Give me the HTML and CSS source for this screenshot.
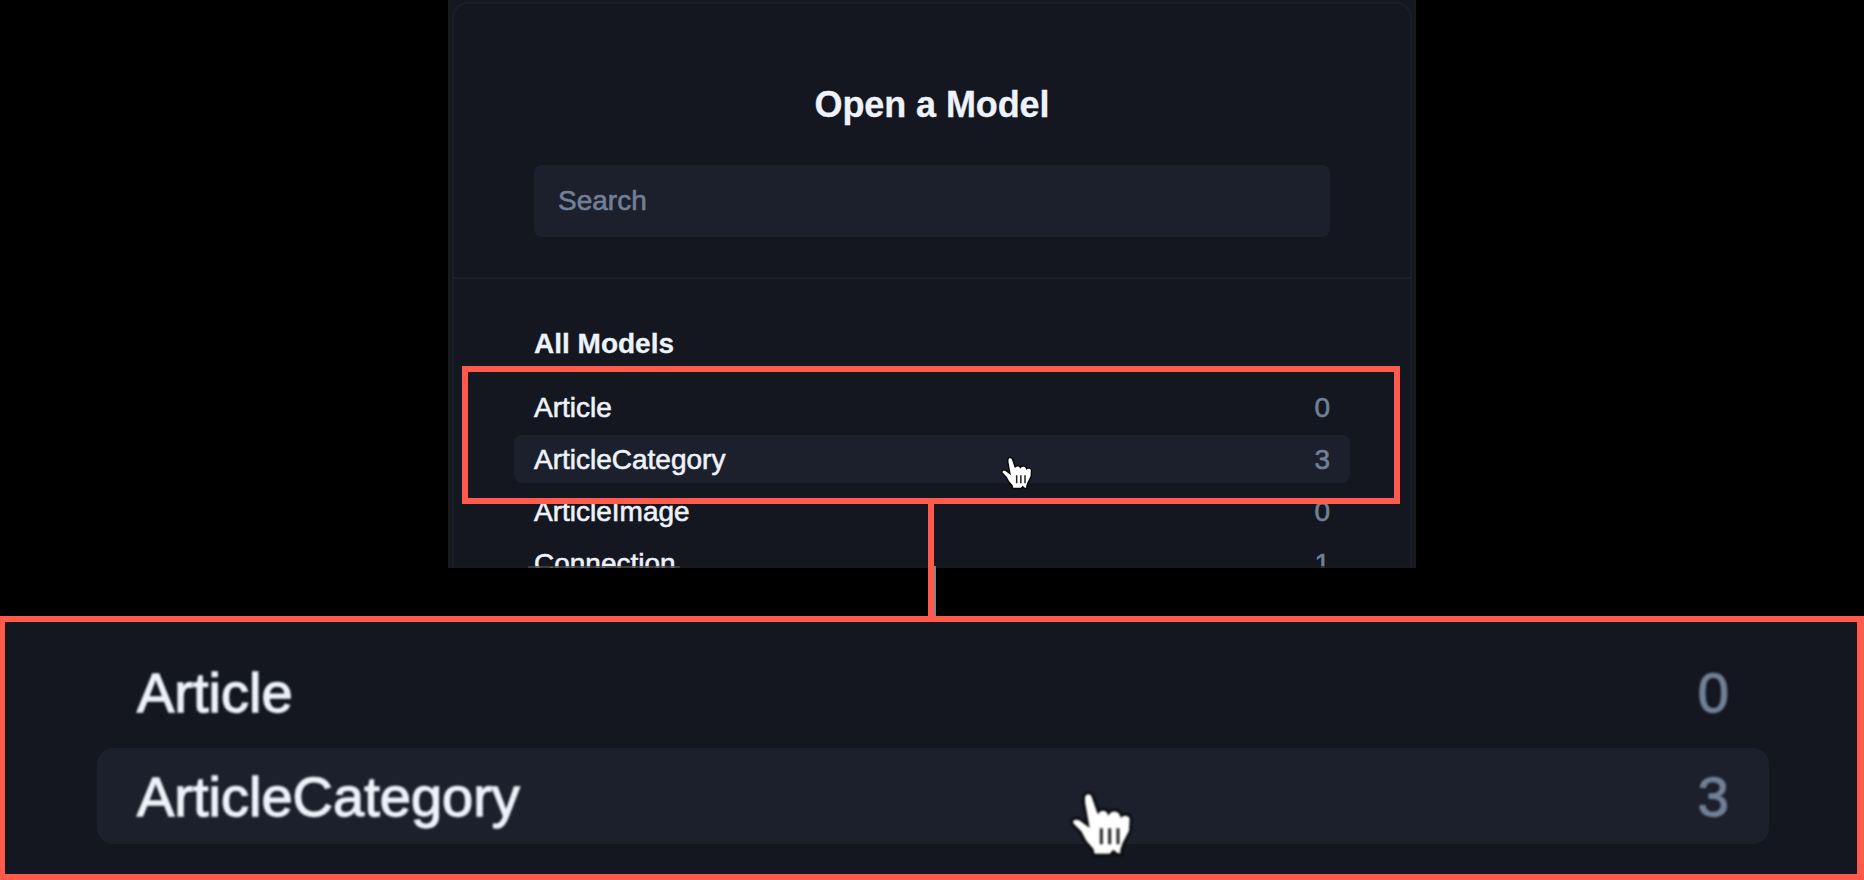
FILE: index.html
```html
<!DOCTYPE html>
<html lang="en">
<head>
<meta charset="utf-8">
<title>Open a Model</title>
<link rel="stylesheet" href="styles.css">
</head>
<body>
<svg class="defs" width="0" height="0" aria-hidden="true">
  <symbol id="hand" viewBox="0 0 330 330">
    <path class="hand-edge" d="M105 82C107 71 121 70 125 80L140 124L145 134C146 121 166 118 171 129L176 137C179 122 202 120 208 133L213 144C220 133 237 136 239 146L237 182L218 219L211 239V250H203L190 239L179 251H134L130 236L109 212L94 184L71 161C65 151 76 146 88 151L119 174L105 96Z"/>
    <path class="hand-fill" d="M105 82C107 71 121 70 125 80L140 124L145 134C146 121 166 118 171 129L176 137C179 122 202 120 208 133L213 144C220 133 237 136 239 146L237 182L218 219L211 239V250H203L190 239L179 251H134L130 236L109 212L94 184L71 161C65 151 76 146 88 151L119 174L105 96Z"/>
    <path class="hand-lines" d="M154 175V223M179 175V223M204 175V223"/>
  </symbol>
</svg>
<main class="stage">
  <section class="panel">
    <div class="dialog">
      <header class="head">
        <h1 class="title">Open a Model</h1>
        <div class="search">Search</div>
      </header>
      <div class="body">
        <h2 class="subtitle">All Models</h2>
        <ul class="list">
          <li class="row"><span>Article</span><span class="count">0</span></li>
          <li class="row active"><span>ArticleCategory</span><span class="count">3</span></li>
          <li class="row"><span>ArticleImage</span><span class="count">0</span></li>
          <li class="row"><span>Connection</span><span class="count">1</span></li>
        </ul>
      </div>
    </div>
    <div class="edge"></div>
    <div class="edge-label"></div>
  </section>
  <section class="closeup">
    <ul class="list large">
      <li class="row"><span>Article</span><span class="count">0</span></li>
      <li class="row active"><span>ArticleCategory</span><span class="count">3</span></li>
    </ul>
  </section>
  <div class="callout"></div>
  <div class="connector"></div>
  <div class="connector-shade"></div>
  <svg class="cursor small"><use href="#hand"/></svg>
  <svg class="cursor big"><use href="#hand"/></svg>
</main>
</body>
</html>
```
FILE: styles.css
```css
* { box-sizing: border-box; }
body {
  margin: 0;
  background: #000;
  color: #edf2fb;
  font-family: "Liberation Sans", Arial, sans-serif;
  font-size: 28px;
  overflow: hidden;
}
.defs { position: absolute; }
.stage {
  position: relative;
  width: 1864px;
  height: 880px;
  display: flex;
  flex-direction: column;
  justify-content: space-between;
}
.panel {
  position: relative;
  width: 968px;
  height: 568px;
  margin: 0 auto;
  padding: 2px 2px 0;
  overflow: hidden;
  background: #14171f;
  border: solid #1a1a1a;
  border-width: 0 2px;
}
.dialog {
  height: 700px;
  border: 2px solid #1b1f2b;
  border-radius: 16px;
}
.head {
  padding: 79px 80px 40px;
  border-bottom: 2px solid #1b1f2b;
}
.title {
  margin: 0 0 38px;
  font-size: 36px;
  line-height: 44px;
  text-align: center;
  letter-spacing: -0.1px;
  -webkit-text-stroke: 0.3px currentColor;
}
.search {
  height: 72px;
  padding: 0 24px;
  line-height: 72px;
  border-radius: 8px;
  background: #1c202c;
  color: #718096;
  -webkit-text-stroke: 0.6px currentColor;
}
.body { padding: 48px 80px 0; }
.subtitle {
  margin: 0 0 22px;
  font-size: 28px;
  line-height: 34px;
  -webkit-text-stroke: 0.3px currentColor;
}
.list {
  margin: 0 -20px;
  padding: 0;
  list-style: none;
  display: flex;
  flex-direction: column;
  gap: 4px;
}
.row {
  display: flex;
  justify-content: space-between;
  height: 48px;
  padding: 0 20px;
  line-height: 50px;
  border-radius: 8px;
  -webkit-text-stroke: 0.6px currentColor;
}
.active { background: #1c202c; }
.count { color: #718096; }
.edge {
  position: absolute;
  left: 0;
  right: 0;
  bottom: 0;
  height: 2px;
  background: rgba(26, 26, 26, 0.7);
}
.edge-label {
  position: absolute;
  left: 78px;
  bottom: 0;
  width: 152px;
  height: 2px;
  background: rgba(128, 128, 128, 0.35);
}
.closeup {
  height: 264px;
  padding: 22px 88px 0 92px;
  background: #14171f;
  border: solid #ff5a4b;
  border-width: 6px 7px 6px 5px;
}
.large {
  margin: 0;
  gap: 8px;
  font-size: 56px;
}
.large .row {
  height: 96px;
  padding: 0 40px;
  line-height: 98px;
  border-radius: 16px;
  -webkit-text-stroke: 1.3px currentColor;
}
.large .row span { filter: blur(0.8px); }
.callout {
  position: absolute;
  left: 462px;
  top: 366px;
  width: 938px;
  height: 138px;
  border: 6px solid #ff5a4b;
}
.connector {
  position: absolute;
  left: 928px;
  top: 504px;
  width: 6px;
  height: 112px;
  background: #ff5a4b;
}
.connector-shade {
  position: absolute;
  left: 934px;
  top: 566px;
  width: 2px;
  height: 50px;
  background: #858585;
}
.cursor { position: absolute; }
.small {
  left: 991px;
  top: 446px;
  width: 55px;
  height: 55px;
}
.big {
  left: 1050px;
  top: 770px;
  width: 110px;
  height: 110px;
  filter: blur(0.9px);
}
.hand-edge {
  fill: #000;
  stroke: #08090c;
  stroke-width: 16;
  stroke-linejoin: round;
}
.hand-fill { fill: #fff; }
.hand-lines {
  fill: none;
  stroke: #222;
  stroke-width: 9;
}
```
